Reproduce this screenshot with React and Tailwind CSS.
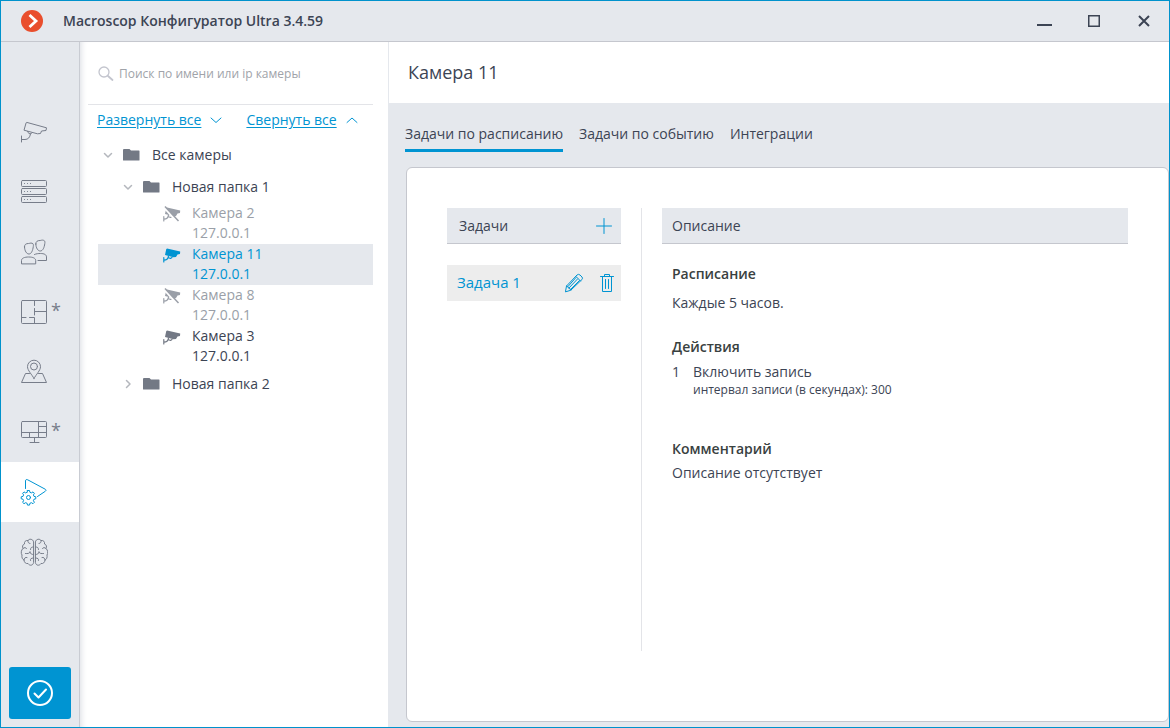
import React from "react";

const stroke = {
  fill: "none",
  stroke: "currentColor",
  strokeLinecap: "round",
  strokeLinejoin: "round",
};

const NavIcon = ({ children }) => (
  <svg width="28" height="28" viewBox="0 0 28 28" {...stroke}>
    {children}
  </svg>
);

const CameraOutline = () => (
  <NavIcon>
    <path d="M7.2 4.5 26.5 9.8 26 12.5 21.5 13 20.5 15.5 17.5 15.8 4 12.2 6 5.2Z" />
    <path d="M7.5 13.5c.5 2 2.5 2.5 3.5 2.3l1.5-1.5M10.5 16c-.5 3.5-2.5 5.5-5.5 5.5H2M1.5 18v6" />
  </NavIcon>
);

const ServersIcon = () => (
  <NavIcon>
    <rect x="1.5" y="2.5" width="25" height="6" rx="1" />
    <rect x="1.5" y="10.5" width="25" height="6" rx="1" />
    <rect x="1.5" y="18.5" width="25" height="6" rx="1" />
    <path d="M4.5 5.5h.1M7.5 5.5h.1M10.5 5.5h.1M4.5 13.5h.1M7.5 13.5h.1M10.5 13.5h.1M4.5 21.5h.1M7.5 21.5h.1M10.5 21.5h.1" />
  </NavIcon>
);

const UsersIcon = () => (
  <NavIcon>
    <path d="M4.500 9c-.2-2.500 1.500-3.500 4-3.500 1 0 2-.7 3.500-.3 1.600.4 1.500 2 1.300 3.300-.5 4-2 7.500-4.300 7.500-2.500 0-4.300-3-4.500-7Z" />
    <path d="M15.800 6c-.2-2.500 1.700-3.500 4.200-3.500 1 0 2-.7 3.500-.2 1.600.4 1.500 2 1.300 3.200-.5 4-2 7.500-4.500 7.500s-4.300-3-4.500-7Z" />
    <path d="M1.500 25.500v-3c0-2.300 3-3.500 7.200-3.500s7 1.200 7 3.500v3Z" />
    <path d="M14.500 16.500c1.700-.8 3.800-1 6-1 3.500 0 6 1 6 3.500v3.500h-8.500" />
  </NavIcon>
);

const PlanIcon = () => (
  <NavIcon>
    <rect x="1.5" y="2.5" width="25" height="23" rx="1" />
    <path d="M14.5 3v4.500M14.5 10.500v6.500M14.5 13.500H26M2 19.500h4M9.500 19.500h5v6" />
  </NavIcon>
);

const MapIcon = () => (
  <NavIcon>
    <path d="M14 20.500C12 16.500 7.500 12.500 7.500 8.700a6.500 6.500 0 0 1 13 0c0 3.800-4.500 7.800-6.500 11.800Z" />
    <circle cx="14" cy="8.5" r="3.5" />
    <path d="M9.500 15.500h-4l-4 9h25l-4-9h-4" />
  </NavIcon>
);

const MonitorIcon = () => (
  <NavIcon>
    <rect x="1.5" y="3.5" width="25" height="16" rx="1" />
    <path d="M18.500 4v15M2 14.500h24M18.500 8.500H26M9.500 15v4M14.500 20v4M10 24.500h9" />
  </NavIcon>
);

const AutomationIcon = () => (
  <NavIcon>
    <path d="M5.500 10.500V3c0-1.500 1-1.800 2.200-1.200l17.500 9.400c1 .6 1 1.400.2 2L17.500 18.500" />
    <path d="M7.500 12.500h2l.4 1.800 1.500.6 1.600-1 1.400 1.400-1 1.600.6 1.500 1.800.4v2l-1.800.4-.6 1.500 1 1.600-1.400 1.400-1.600-1-1.500.6-.4 1.800h-2l-.4-1.800-1.500-.6-1.600 1-1.400-1.400 1-1.600-.6-1.500-1.800-.4v-2l1.800-.4.6-1.500-1-1.600L4 13.900l1.600 1 1.500-.6Z" />
    <circle cx="8.5" cy="19.5" r="2" />
  </NavIcon>
);

const BrainIcon = () => (
  <NavIcon>
    <path d="M13.500 3.500C13 .8 9 .5 8 2.500 5.500 2 4 4 4.500 6 2.500 6.500 2 9 3 10.500 1 12 .8 15.500 2 17c-.5 2.500.5 4.500 2 5 .2 2.500 2 4 4 3.500 1.500 2.500 5 2.300 5.500-.5Z" />
    <path d="M15.500 3.500c.5-2.700 4.500-3 5.500-1C23.500 2 25 4 24.500 6c2 .5 2.500 3 1.500 4.500 2 1.500 2.200 5 1 6.500.5 2.500-.5 4.500-2 5-.2 2.500-2 4-4 3.500-1.500 2.500-5 2.300-5.500-.5Z" />
    <path d="M8 2.500c-.5 1.500.5 3 2 3M3 10.500c1.500-1.500 3-1 3.500 0M13.500 9c-2 0-3 .5-3 2.500M5.500 15.500c2 0 4 .5 4.500-1.500M10 14c.5 2 1.500 2.500 3.500 2.500M4 22c0-2 1.500-3 3-2.500M10.500 22.500c-.5-1.500.5-2.500 3-2.500" />
    <path d="M21 2.500c.5 1.500-.5 3-2 3M26 10.500c-1.500-1.500-3-1-3.500 0M15.500 9c2 0 3 .5 3 2.500M23.500 15.500c-2 0-4 .5-4.500-1.500M19 14c-.5 2-1.500 2.500-3.500 2.500M25 22c0-2-1.500-3-3-2.500M18.500 22.500c.5-1.500-.5-2.500-3-2.500" />
  </NavIcon>
);

const Chevron = ({ d, className }) => (
  <svg width="12" height="12" viewBox="0 0 12 12" className={className} {...stroke}>
    <path d={d} />
  </svg>
);

const FolderIcon = () => (
  <svg width="17" height="14" viewBox="0 0 17 14" fill="#737985">
    <path d="M1 1h5.500l1.500 1.500h8q.5 0 .5.500v9q0 .5-.5.500H.500Q0 12.500 0 12V2q0-1 1-1Z" />
  </svg>
);

const CameraSolid = ({ off }) => (
  <svg width="18" height="18" viewBox="0 0 18 18">
    <path
      fill="currentColor"
      d="M4 1.500 17.200 4.500 17 7 14.500 7.500 13 10 10.500 10.300 2 8 3.200 2.200Z"
    />
    <path
      {...stroke}
      strokeWidth="1.200"
      d="M.8 10.500v4.500M1 13.200c2.500 0 4-1 4.500-4M5 10.500 7.500 11.500 9 10.500"
    />
    {off && (
      <>
        <path d="M1 1.500 13.500 15" stroke="#fff" strokeWidth="2" />
        <path d="M2 .5 15.500 15" stroke="currentColor" strokeWidth="1.500" />
      </>
    )}
  </svg>
);

const navItems = [
  { label: "Камеры", icon: CameraOutline },
  { label: "Серверы", icon: ServersIcon },
  { label: "Пользователи", icon: UsersIcon },
  { label: "Планы", icon: PlanIcon, changed: true },
  { label: "Карты", icon: MapIcon },
  { label: "Видеостены", icon: MonitorIcon, changed: true },
  { label: "Автоматизация", icon: AutomationIcon, active: true },
  { label: "Аналитика", icon: BrainIcon },
];

const cameras = [
  { name: "Камера 2", ip: "127.0.0.1", off: true },
  { name: "Камера 11", ip: "127.0.0.1", selected: true },
  { name: "Камера 8", ip: "127.0.0.1", off: true },
  { name: "Камера 3", ip: "127.0.0.1" },
];

const tabs = ["Задачи по расписанию", "Задачи по событию", "Интеграции"];

const TitleBar = () => (
  <header className="flex h-[41px] shrink-0 items-center border-b border-[#c5c7ce] pl-5">
    <svg width="22" height="22" viewBox="0 0 22 22" className="mr-5">
      <circle cx="11" cy="11" r="11" fill="#e94e2d" />
      <path d="M8.500 5 15 11l-6.500 6" fill="none" stroke="#fff" strokeWidth="2.800" />
    </svg>
    <h1 className="flex-1 text-sm font-semibold">
      Macroscop Конфигуратор Ultra 3.4.59
    </h1>
    <button aria-label="Свернуть" className="flex h-10 w-[50px] items-center justify-center">
      <svg width="16" height="16" viewBox="0 0 16 16" fill="#3c4454">
        <path d="M1 11h15v2H1Z" />
      </svg>
    </button>
    <button aria-label="Развернуть" className="flex h-10 w-[50px] items-center justify-center">
      <svg width="12" height="12" viewBox="0 0 12 12" fill="none" stroke="#3c4454">
        <path d="M.75.75h10.500v10.500H.75Z" strokeWidth="1.5" />
      </svg>
    </button>
    <button aria-label="Закрыть" className="flex h-10 w-[50px] items-center justify-center">
      <svg width="12" height="12" viewBox="0 0 12 12" fill="none" stroke="#3c4454">
        <path d="M1 1l10 10M11 1 1 11" strokeWidth="2" />
      </svg>
    </button>
  </header>
);

const Sidebar = () => (
  <nav className="flex w-[79px] shrink-0 flex-col border-r border-[#c9ccd3] pt-[60px]">
    {navItems.map(({ label, icon: Icon, changed, active }) => (
      <button
        key={label}
        aria-label={label}
        className={`flex h-[60px] items-center pl-[19px] ${
          active ? "bg-white text-[#0094d2]" : "text-[#777d8a]"
        }`}
      >
        <Icon />
        {changed && <span className="pb-1 pl-[3px] text-lg">*</span>}
      </button>
    ))}
    <button
      aria-label="Применить"
      className="mx-2 mt-auto mb-2 flex h-[52px] w-[62px] items-center justify-center rounded-[3px] bg-[#0094d2] text-white"
    >
      <svg width="28" height="28" viewBox="0 0 28 28" {...stroke} strokeWidth="2">
        <circle cx="14" cy="14" r="12" />
        <path d="M8.500 14.500 12.500 18.500 20 10.500" />
      </svg>
    </button>
  </nav>
);

const FolderRow = ({ name, open, nested }) => (
  <button
    aria-expanded={open}
    className={`flex h-8 w-full items-center ${nested ? "pl-6" : "pl-1"}`}
  >
    <Chevron
      d={open ? "M2.500 4.500 6 8l3.500-3.500" : "M4.500 2.500 8 6 4.500 9.500"}
      className="mr-[9px] stroke-[1.5] text-[#b4b7bd]"
    />
    <FolderIcon />
    <span className="pl-3">{name}</span>
  </button>
);

const CameraRow = ({ name, ip, off, selected }) => (
  <button
    className={`flex h-[41px] w-full items-start pl-[65px] text-left leading-5 ${
      selected ? "bg-[#e5e8ed] text-[#0094d2]" : off ? "text-[#9a9fa8]" : ""
    }`}
  >
    <span className={`pt-[3px] ${selected || off ? "" : "text-[#737985]"}`}>
      <CameraSolid off={off} />
    </span>
    <span className="pl-[11px]">
      {name}
      <br />
      {ip}
    </span>
  </button>
);

const CameraTree = () => (
  <aside className="w-[308px] shrink-0 bg-white pr-[15px] pl-2 shadow-[inset_6px_0_6px_-5px_#d9dce2]">
    <label className="flex h-[63px] items-center gap-[5px] border-b border-[#e3e4e8] pt-[2px] pl-[10px]">
      <svg width="16" height="16" viewBox="0 0 16 16" {...stroke} className="text-[#c3c5ce]">
        <circle cx="6" cy="6" r="5" strokeWidth="1.3" />
        <path d="M10 10l4.500 4" strokeWidth="1.8" />
      </svg>
      <input
        type="text"
        placeholder="Поиск по имени или ip камеры"
        aria-label="Поиск по имени или ip камеры"
        className="min-w-0 flex-1 text-xs outline-none placeholder:text-[#a0a3a9]"
      />
    </label>

    <div className="mb-1 flex h-[30px] items-center pl-[9px] text-[#0094d2]">
      <button className="flex items-center gap-[9px]">
        <span className="underline underline-offset-2">Развернуть все</span>
        <Chevron d="M1 4l5 4.500L11 4" />
      </button>
      <button className="ml-6 flex items-center gap-[9px]">
        <span className="underline underline-offset-2">Свернуть все</span>
        <Chevron d="M1 8.500 6 4l5 4.500" />
      </button>
    </div>

    <div className="ml-[10px]">
      <FolderRow name="Все камеры" open />
      <FolderRow name="Новая папка 1" open nested />
      <div className="pb-px">
        {cameras.map((camera) => (
          <CameraRow key={camera.name} {...camera} />
        ))}
      </div>
      <FolderRow name="Новая папка 2" open={false} nested />
    </div>
  </aside>
);

const TaskList = () => (
  <div className="w-[195px] shrink-0 border-r border-[#e3e4e8] pr-5">
    <div className="flex h-9 items-center justify-between border-b border-[#c5c7ce] bg-[#e5e8ed] pr-2 pl-3">
      <h3>Задачи</h3>
      <button aria-label="Добавить задачу" className="text-[#0094d2]">
        <svg width="18" height="18" viewBox="0 0 18 18" {...stroke}>
          <path d="M9 1.500v15M1.500 9h15" />
        </svg>
      </button>
    </div>
    <div className="mt-[21px] flex h-9 items-center bg-[#ededed] pr-1 pl-[10px] text-[#0094d2]">
      <button className="flex-1 text-left text-[15px]">Задача 1</button>
      <button aria-label="Изменить" className="mr-[13px]">
        <svg width="20" height="20" viewBox="0 0 20 20" {...stroke}>
          <path d="M1.500 18.500 2.500 13 13 2q1.500-1.300 3 0L18 4q1 1.200 0 2.500L7 17ZM2.500 13l1.500 1 1 1.500 1.500.5.500 1M12 3.500l4.500 4.500M13.500 6 5 15M12 4.500 4 13.500M15.500 7.500 6.500 16.500" />
        </svg>
      </button>
      <button aria-label="Удалить">
        <svg width="20" height="20" viewBox="0 0 20 20" {...stroke}>
          <path d="M3.500 3.500h13M7.500 3.500v-2h5v2M5.500 4v14.500h9V4M8.500 6.500v9M11.500 6.500v9" />
        </svg>
      </button>
    </div>
  </div>
);

const TaskDescription = () => (
  <div className="ml-5 min-w-0 flex-1">
    <h3 className="flex h-9 items-center border-b border-[#c5c7ce] bg-[#e5e8ed] pl-[10px]">
      Описание
    </h3>
    <div className="pt-5 pl-[10px] leading-5">
      <h4 className="font-semibold text-[#39413f]">Расписание</h4>
      <p className="mt-[9px]">Каждые 5 часов.</p>

      <h4 className="mt-6 font-semibold text-[#39413f]">Действия</h4>
      <div className="mt-[5px] flex">
        <span className="w-[21px]">1</span>
        <div>
          <p>Включить запись</p>
          <p className="text-xs leading-4">интервал записи (в секундах): 300</p>
        </div>
      </div>

      <h4 className="mt-[41px] font-semibold text-[#39413f]">Комментарий</h4>
      <p className="mt-1">Описание отсутствует</p>
    </div>
  </div>
);

const App = () => {
  return (
    <div className="flex min-h-screen flex-col border border-[#0092cc] bg-[#e5e8ed] font-['Open_Sans','Noto_Sans',sans-serif] text-sm text-[#3c4454]">
      <TitleBar />
      <div className="flex flex-1">
        <Sidebar />
        <CameraTree />
        <main className="flex min-w-0 flex-1 flex-col">
          <h2 className="flex h-[61px] items-center border-l border-[#e5e8ed] bg-white pb-[2px] pl-[19px] text-lg">
            Камера 11
          </h2>
          <div role="tablist" className="flex gap-4 pt-5 pl-[17px]">
            {tabs.map((tab, index) => (
              <button
                key={tab}
                role="tab"
                aria-selected={index === 0}
                className={`h-[29px] border-b-[3px] pb-1 ${
                  index === 0 ? "border-[#0094d2]" : "border-transparent"
                }`}
              >
                {tab}
              </button>
            ))}
          </div>
          <section className="mt-[15px] mb-[5px] ml-[18px] flex flex-1 rounded-md border border-[#c5c7ce] bg-white px-10 pt-10 pb-[70px]">
            <TaskList />
            <TaskDescription />
          </section>
        </main>
      </div>
    </div>
  );
};

export default App;
